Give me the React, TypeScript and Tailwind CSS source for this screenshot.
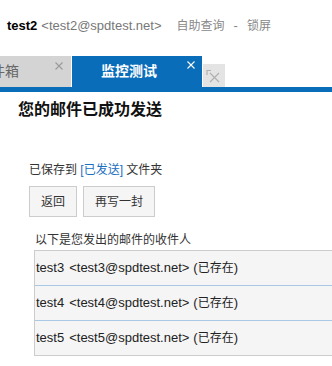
const font = { fontFamily: '"Liberation Sans", "Noto Sans CJK SC", sans-serif' };

const recipients = ["test3", "test4", "test5"];

function TabClose({ color }: { color: string }) {
  return (
    <svg width="8" height="8" viewBox="0 0 8 8" className="absolute" fill="none" stroke={color} strokeWidth="1.1">
      <path d="M0.5 0.5 L7.5 7.5 M7.5 0.5 L0.5 7.5" />
    </svg>
  );
}

export default function App() {
  return (
    <div className="w-[332px] h-[366px] bg-white overflow-hidden text-[#222]" style={font}>
      {/* top user bar */}
      <div className="h-[56px] pt-[18px] pl-[7px] flex items-start text-[13px] leading-[16px] whitespace-nowrap">
        <span className="font-bold text-black">test2</span>
        <span className="ml-[4px] text-[#777]">&lt;test2@spdtest.net&gt;</span>
        <span className="ml-[15px] text-[12px] text-[#888]">自助查询</span>
        <span className="ml-[9px] text-[#888]">-</span>
        <span className="ml-[9px] text-[12px] text-[#888]">锁屏</span>
      </div>

      {/* tabs */}
      <div className="flex items-end h-[31px]">
        <div className="relative w-[71px] h-full bg-[#d4d4d4] overflow-hidden flex items-center">
          <span className="ml-[-23px] text-[14px] text-[#666] whitespace-nowrap">收件箱</span>
          <div className="absolute left-[55px] top-[6px]">
            <TabClose color="#9a9a9a" />
          </div>
        </div>
        <div className="relative ml-[1px] w-[130px] h-full bg-[#0a6dba] flex items-center">
          <span className="ml-[29px] text-[14px] font-bold text-white">监控测试</span>
          <div className="absolute left-[115px] top-[5px]">
            <TabClose color="#ffffff" />
          </div>
        </div>
        <div className="ml-[1px] w-[22px] h-[23px] bg-[#e4e4e4] flex items-center justify-center">
          <svg width="16" height="14" viewBox="0 0 16 14" fill="none" stroke="#b0b0b0" strokeWidth="1.2">
            <path d="M1 6 V1.5 H5" />
            <path d="M4 4 L13 13 M13 4 L4 13" />
          </svg>
        </div>
      </div>
      <div className="h-[5px] bg-[#0a6dba]" />

      {/* body */}
      <div className="pl-[18px] mt-[8px] text-[16px] leading-[20px] font-bold text-[#111]">您的邮件已成功发送</div>

      <div className="pl-[29px] mt-[42px] text-[12px] leading-[16px] text-[#333] whitespace-nowrap">
        已保存到 <span className="text-[#1a6fbf]">[已发送]</span> 文件夹
      </div>

      <div className="pl-[29px] mt-[8px] flex gap-[6px]">
        <button className="h-[31px] px-[11px] border border-[#cccccc] bg-[#f5f5f5] text-[12px] text-[#333]">返回</button>
        <button className="h-[31px] px-[11px] border border-[#cccccc] bg-[#f5f5f5] text-[12px] text-[#333]">再写一封</button>
      </div>

      <div className="pl-[35px] mt-[15px] text-[12px] leading-[16px] text-[#333]">以下是您发出的邮件的收件人</div>

      <div className="ml-[34px] mt-[2px] w-[310px] border border-[#cccccc] bg-[#f5f5f5]">
        {recipients.map((r, i) => (
          <div
            key={r}
            className={
              "h-[34px] pl-[1px] flex items-center text-[13px] text-[#222] whitespace-nowrap" +
              (i > 0 ? " border-t border-[#a9c8e6] h-[35px]" : "")
            }
          >
            <span className="mr-[5px]">{r}</span>
            <span>&lt;{r}@spdtest.net&gt;</span>
            <span className="ml-[4px]">(<span className="text-[12px]">已存在</span>)</span>
          </div>
        ))}
      </div>
    </div>
  );
}
